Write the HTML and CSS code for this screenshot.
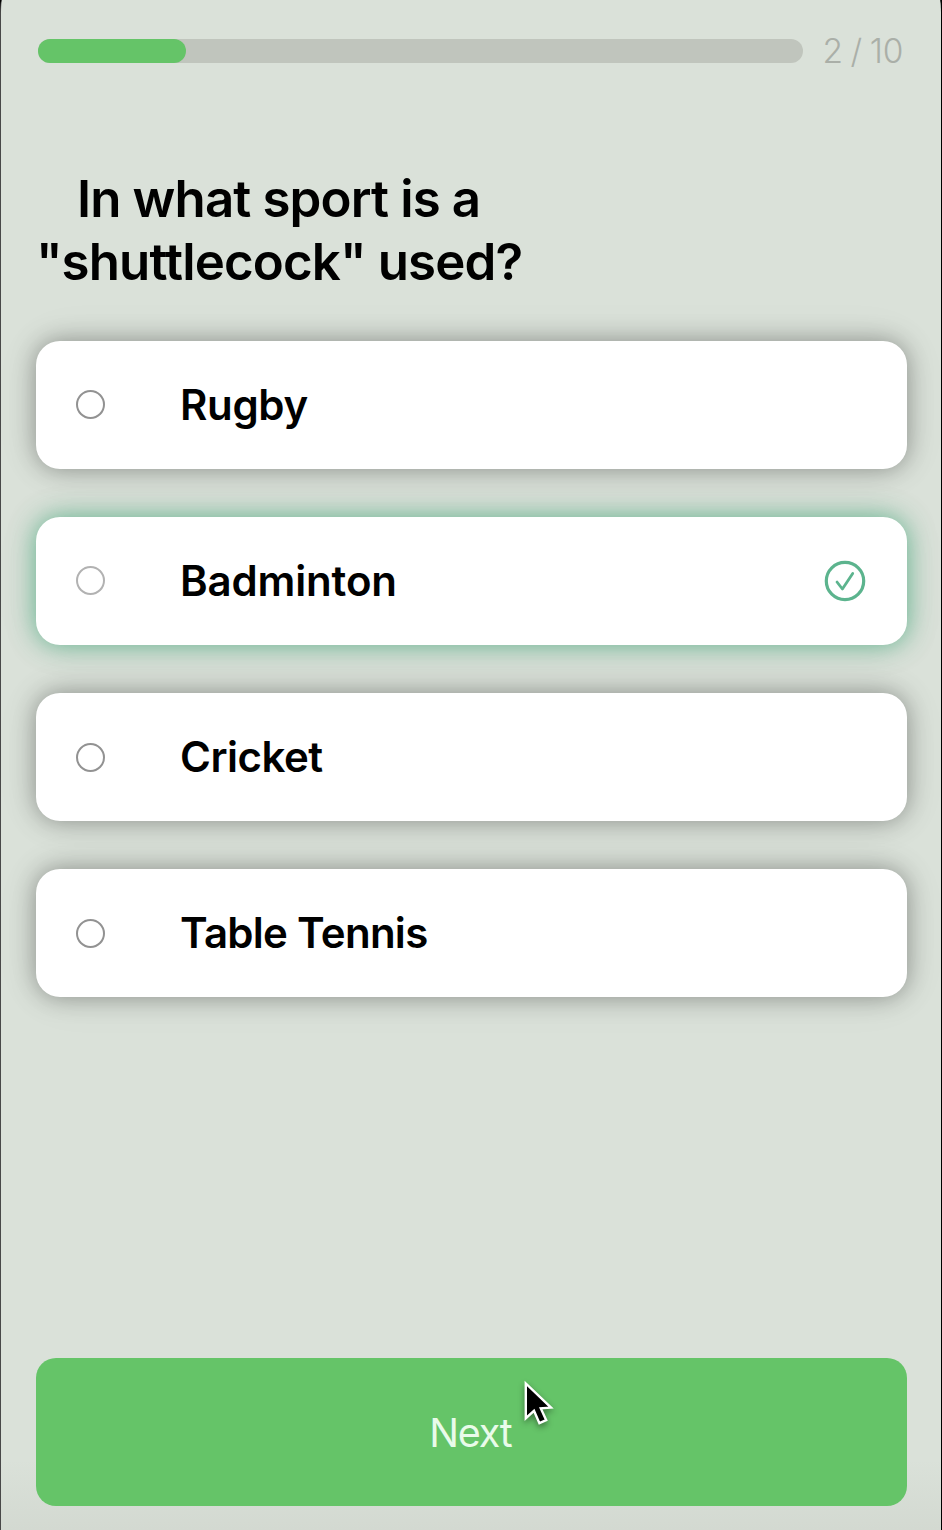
FILE: index.html
```
<!DOCTYPE html>
<html lang="en">
<head>
<meta charset="utf-8">
<title>Quiz</title>
<link rel="stylesheet" href="styles.css">
</head>
<body>
<main class="quiz">
  <header class="progress">
    <div class="track"><div class="fill"></div></div>
    <span class="count">2 / 10</span>
  </header>
  <h1 class="question"><span class="line first">In what sport is a</span><span class="line second">"shuttlecock" used?</span></h1>
  <div class="options">
    <div class="option"><span class="radio"></span><span class="label rugby">Rugby</span></div>
    <div class="option correct"><span class="radio"></span><span class="label badminton">Badminton</span>
      <svg class="check" width="42" height="42" viewBox="0 0 42 42" fill="none" stroke="#5cb48e" stroke-linecap="round" stroke-linejoin="round"><circle cx="21" cy="21" r="18.7" stroke-width="3.2"/><path d="M13 22 L18.4 29 L28.7 13.5" stroke-width="2.8"/></svg>
    </div>
    <div class="option"><span class="radio"></span><span class="label cricket">Cricket</span></div>
    <div class="option"><span class="radio"></span><span class="label tennis">Table Tennis</span></div>
  </div>
  <button class="next">Next</button>
  <svg class="cursor" width="40" height="56" viewBox="0 0 40 56"><path d="M6.8 4.5 V39.2 L15 31.8 L20.4 44.2 L27.2 41.2 L21.8 29.4 L32 28.6 Z" fill="#000" stroke="#fff" stroke-width="2.4"/></svg>
</main>
</body>
</html>
```
FILE: styles.css
```
* { box-sizing: border-box; }
body { margin: 0; background: #000; font-family: Inter, "Liberation Sans", sans-serif; color: #000; }
.quiz {
  position: relative;
  display: flex;
  flex-direction: column;
  width: 942px;
  height: 1530px;
  padding: 39px 34.4px 24.4px 35px;
  border-left: 1px solid #484848;
  border-right: 1px solid #000;
  border-radius: 2px 2px 0 0 / 14px 14px 0 0;
  background: linear-gradient(to bottom, #dae1d9 0, #dae1d9 1460px, #d3d9d1 1530px);
}
.progress { display: flex; align-items: center; height: 24px; padding-left: 1.5px; }
.track { width: 765.5px; height: 24px; border-radius: 12px; background: #c0c5bd; }
.fill { width: 148.5px; height: 24px; border-radius: 12px; background: #65c468; }
.count { margin-left: 19.5px; font-size: 33.5px; font-weight: 300; line-height: 24px; letter-spacing: -.1px; word-spacing: -1.7px; color: #aaafa8; white-space: nowrap; }
.question { margin: 104px 0 0; font-size: 51px; font-weight: 600; line-height: 63px; white-space: nowrap; }
.line { display: block; }
.first { padding-left: 41px; letter-spacing: -.86px; }
.second { letter-spacing: -.87px; }
.options { display: flex; flex-direction: column; gap: 48.3px; margin-top: 47.5px; }
.option {
  display: flex;
  align-items: center;
  height: 128px;
  padding: 0 41px 0 40px;
  border-radius: 24px;
  background: #fff;
  box-shadow: 0 0 24px rgba(0, 0, 0, .34), 0 0 50px rgba(0, 0, 0, .06);
}
.correct { box-shadow: 0 0 26px rgba(46, 164, 112, .68), 0 0 50px rgba(0, 0, 0, .06); }
.radio { width: 29px; height: 29px; border: 2px solid #929292; border-radius: 50%; }
.correct .radio { border-color: #b2b2b2; }
.label { margin-left: 75px; font-size: 42px; font-weight: 600; line-height: 52px; white-space: nowrap; }
.rugby { letter-spacing: -.35px; }
.badminton { letter-spacing: -.15px; }
.cricket { letter-spacing: -.5px; }
.tennis { letter-spacing: -.72px; }
.check { margin-left: auto; }
.next {
  height: 148px;
  margin: auto 0 0;
  padding: 3px 2px 0 0;
  border: 0;
  border-radius: 20px;
  background: #65c468;
  color: #e9fbea;
  font: 400 39.5px/48px Inter, sans-serif;
  letter-spacing: -1.2px;
}
.cursor { position: absolute; left: 518.4px; top: 1379px; filter: drop-shadow(0 3px 3px rgba(0, 0, 0, .4)); }
```
